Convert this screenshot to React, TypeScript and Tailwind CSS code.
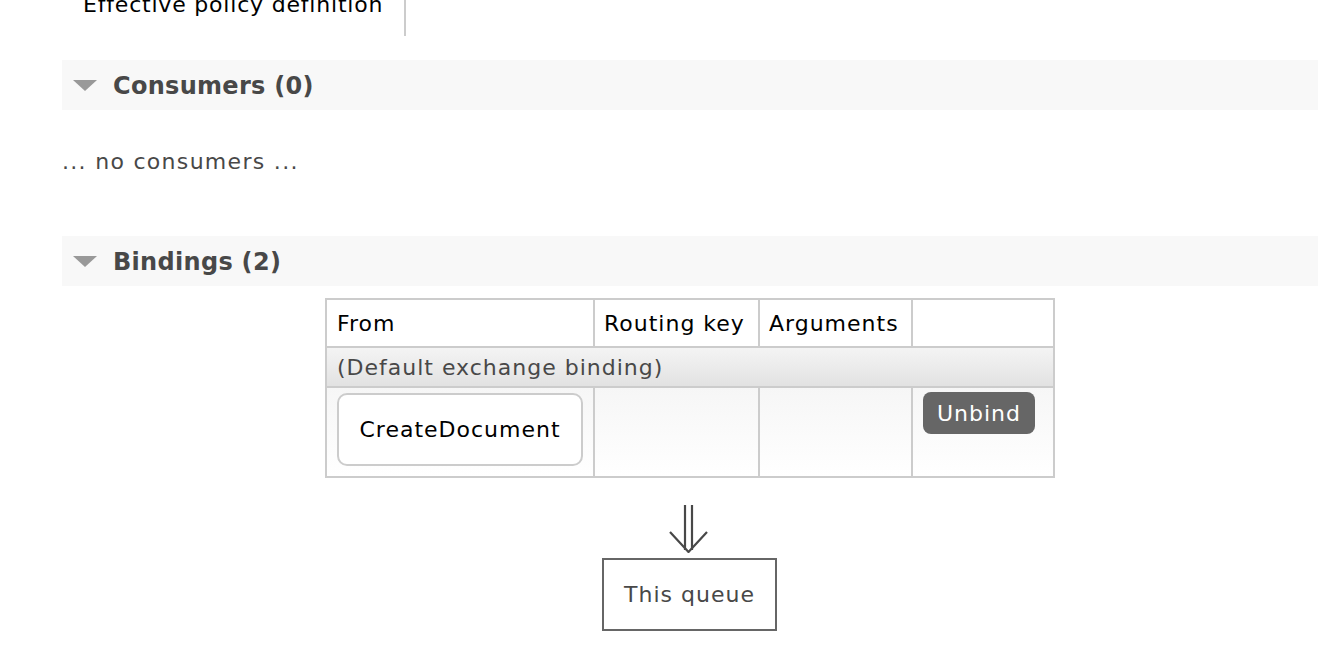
import React from "react";

function Section({ title }: { title: string }) {
  return (
    <div className="flex h-[50px] items-center bg-[#f8f8f8] pl-[11px]">
      <svg width="24" height="11" viewBox="0 0 24 11" className="mr-[16px]">
        <polygon points="0,0 24,0 12,11" fill="#999" />
      </svg>
      <span className="mt-[2px] text-[24px] leading-[30px] font-bold tracking-[0.3px] text-[#484848]">{title}</span>
    </div>
  );
}

export default function App() {
  return (
    <div
      className="w-[1318px] h-[670px] overflow-hidden bg-white text-[#484848] tracking-[1px]"
      style={{ fontFamily: '"DejaVu Sans", Verdana, sans-serif' }}
    >
      <div className="pl-[62px]">
        <div className="relative h-[36px]">
          <div className="absolute left-0 top-[-10px] flex h-[46px] w-[344px] items-start border-r-2 border-[#ccc] pl-[21px]">
            <span className="text-[22px] leading-[30px] tracking-[0.8px] text-black">Effective policy definition</span>
          </div>
        </div>
        <div className="mt-[24px]">
          <Section title="Consumers (0)" />
        </div>
        <div className="mt-[38px] text-[22px] leading-[28px] tracking-[1.3px]">... no consumers ...</div>
        <div className="mt-[60px]">
          <Section title="Bindings (2)" />
        </div>
        <div className="mt-[12px] flex flex-col items-center">
          <table className="border-collapse border-2 border-[#ccc] text-[22px]">
            <thead>
              <tr className="h-[48px] text-black">
                <th className="w-[268px] border-2 border-[#ccc] px-[10px] text-left font-normal">From</th>
                <th className="w-[165px] border-2 border-[#ccc] px-[9px] text-left font-normal">Routing key</th>
                <th className="w-[153px] border-2 border-[#ccc] px-[9px] text-left font-normal">Arguments</th>
                <th className="w-[142px] border-2 border-[#ccc]"></th>
              </tr>
            </thead>
            <tbody>
              <tr className="h-[40px]">
                <td colSpan={4} className="border-2 border-[#ccc] bg-gradient-to-b from-[#f4f4f4] to-[#e2e2e2] px-[10px] text-[#484848]">
                  (Default exchange binding)
                </td>
              </tr>
              <tr className="h-[90px] bg-gradient-to-b from-[#f6f6f6] to-white">
                <td className="border-2 border-[#ccc] px-[10px] align-top pt-[5px]">
                  <div className="flex h-[73px] w-[246px] items-center justify-center rounded-[10px] border-2 border-[#ccc] bg-white text-black">
                    CreateDocument
                  </div>
                </td>
                <td className="border-2 border-[#ccc]"></td>
                <td className="border-2 border-[#ccc]"></td>
                <td className="border-2 border-[#ccc] align-top pl-[10px] pt-[4px]">
                  <div className="flex h-[42px] w-[112px] items-center justify-center rounded-[8px] bg-[#666] text-white">
                    Unbind
                  </div>
                </td>
              </tr>
            </tbody>
          </table>
          <svg width="40" height="48" viewBox="0 0 40 48" className="mt-[27px] -ml-[2px]">
            <g stroke="#484848" strokeWidth="2.2" fill="none">
              <line x1="16" y1="0" x2="16" y2="45" />
              <line x1="23" y1="0" x2="23" y2="45" />
              <polyline points="1,27 19.5,47 38,27" />
            </g>
          </svg>
          <div className="mt-[5px] -ml-[1px] flex h-[73px] w-[175px] items-center justify-center border-2 border-[#666] text-[22px] text-[#484848]">
            This queue
          </div>
        </div>
      </div>
    </div>
  );
}
